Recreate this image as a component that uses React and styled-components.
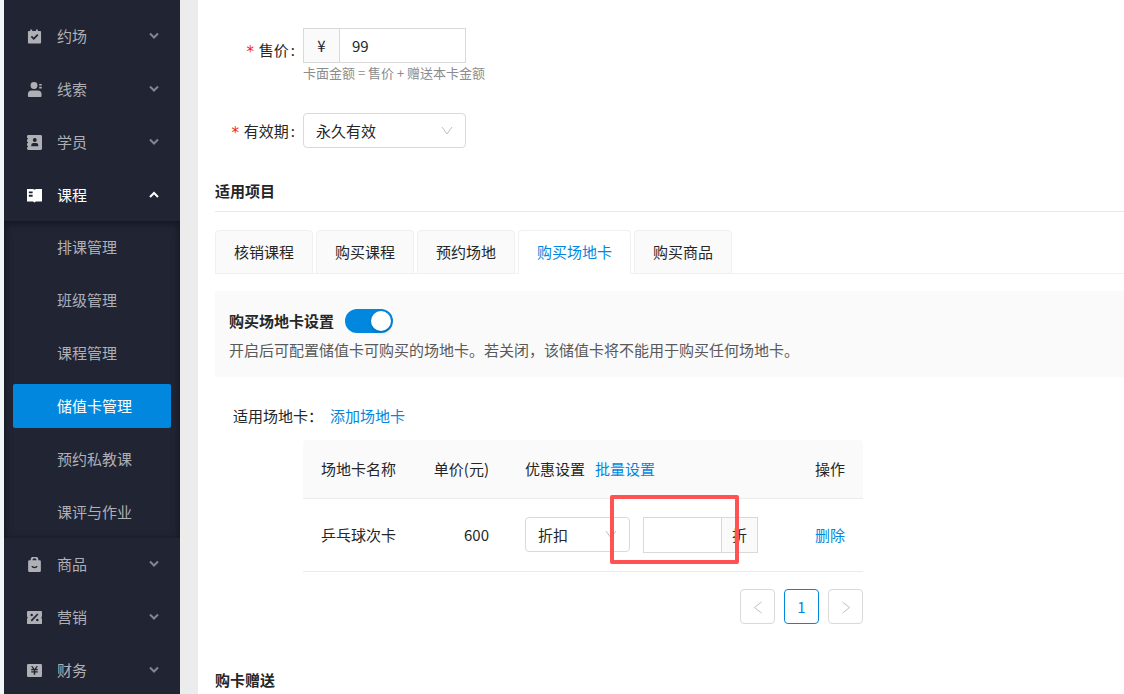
import React, { useState } from "react";
import styled, { createGlobalStyle, css } from "styled-components";

const shopMenu = [
  { key: "booking", name: "约场" },
  { key: "leads", name: "线索" },
  { key: "students", name: "学员" },
  {
    key: "course",
    name: "课程",
    children: ["排课管理", "班级管理", "课程管理", "储值卡管理", "预约私教课", "课评与作业"],
  },
  { key: "goods", name: "商品" },
  { key: "marketing", name: "营销" },
  { key: "finance", name: "财务" },
];

const tabs = ["核销课程", "购买课程", "预约场地", "购买场地卡", "购买商品"];

const icons = {
  booking: (
    <path
      fillRule="evenodd"
      d="M2 2h1.500V.5h2V2h4V.5h2V2H14a1 1 0 0 1 1 1v11.500a1 1 0 0 1-1 1H2a1 1 0 0 1-1-1V3a1 1 0 0 1 1-1zm2 6.500 3.200 3.200 5-5L10.900 5.400 7.200 9.100 5.300 7.200z"
    />
  ),
  leads: (
    <path d="M7.500 0a3.700 3.700 0 1 1 0 7.400 3.700 3.700 0 0 1 0-7.400zM5 9h6.500a4 4 0 0 1 4 4v2a1 1 0 0 1-1 1H2a1 1 0 0 1-1-1v-2a4 4 0 0 1 4-4zM13 2h2.700v1.800H13zM13 5h2.700v1.800H13z" />
  ),
  students: (
    <path
      fillRule="evenodd"
      d="M1.500 0h13A1.500 1.500 0 0 1 16 1.500v13a1.500 1.500 0 0 1-1.500 1.500h-13A1.500 1.500 0 0 1 0 14.500V13h1v-1.500H0v-2.700h1V7.300H0V4.600h1V3.100H0V1.500A1.500 1.500 0 0 1 1.500 0zM8.300 3.300a2.100 2.100 0 1 0 0 4.200 2.100 2.100 0 0 0 0-4.200zM4.500 12h7.600v-1.200a2.500 2.500 0 0 0-2.500-2.400H7a2.500 2.500 0 0 0-2.500 2.400z"
    />
  ),
  course: (
    <path
      fillRule="evenodd"
      d="M0 1h6.500L8 1.800 9.500 1H16v13.500H9.500L8 15.500l-1.500-1H0zM2 3.800v1.900h4V3.800zM2 7.300v1.900h4V7.300z"
    />
  ),
  goods: (
    <path
      fillRule="evenodd"
      d="M3.800 3.500a4.200 4.200 0 0 1 8.400 0h1.300a1.300 1.300 0 0 1 1.300 1.300v9.900a1.300 1.300 0 0 1-1.300 1.300H2.500a1.300 1.300 0 0 1-1.300-1.300V4.800a1.300 1.300 0 0 1 1.300-1.300zm2 0h4.400a2.200 2.200 0 0 0-4.400 0zM4.500 9.500a3.700 3.700 0 0 0 7 0H9.800a2.100 2.100 0 0 1-3.600 0z"
    />
  ),
  marketing: (
    <path
      fillRule="evenodd"
      d="M1 1h14a1 1 0 0 1 1 1v5a1.200 1.200 0 0 0 0 2.200V14a1 1 0 0 1-1 1H1a1 1 0 0 1-1-1V9.200A1.200 1.200 0 0 0 0 7V2a1 1 0 0 1 1-1zm9.900 2.600-7 7.300 1.300 1.300 7-7.300zM5 4a1.300 1.300 0 1 0 0 2.600A1.300 1.300 0 0 0 5 4zm6 5.400a1.300 1.300 0 1 0 0 2.600 1.300 1.300 0 0 0 0-2.600z"
    />
  ),
  finance: (
    <path
      fillRule="evenodd"
      d="M1.300 1h13.400A1.300 1.300 0 0 1 16 2.300v11.400a1.300 1.300 0 0 1-1.300 1.300H1.300A1.300 1.300 0 0 1 0 13.700V2.300A1.300 1.300 0 0 1 1.300 1zM4.300 3.500l2 3H4.500v1.300h2.700v.9H4.500V10h2.700v2.500h1.600V10h2.700V8.700H8.800v-.9h2.700V6.500H9.700l2-3H10L8 6.400 6 3.500z"
    />
  ),
};

function MenuIcon({ name }) {
  return (
    <svg width="15" height="15" viewBox="0 0 16 16" fill="currentColor" aria-hidden="true">
      {icons[name]}
    </svg>
  );
}

function MenuArrow({ open }) {
  return (
    <svg width="10" height="10" viewBox="0 0 10 10" fill="none" stroke="currentColor" strokeWidth="2" aria-hidden="true">
      <path d={open ? "M1 7l4-4 4 4" : "M1 2.500l4 4 4-4"} />
    </svg>
  );
}

function Sidebar() {
  return (
    <Side>
      {shopMenu.map((item) => (
        <MenuGroup key={item.key}>
          <MenuItem type="button" $open={Boolean(item.children)} aria-expanded={Boolean(item.children)}>
            <MenuIcon name={item.key} />
            <span>{item.name}</span>
            <MenuArrow open={Boolean(item.children)} />
          </MenuItem>
          {item.children && (
            <SubMenu>
              {item.children.map((child) => (
                <SubItem key={child} href="#" $active={child === "储值卡管理"}>
                  {child}
                </SubItem>
              ))}
            </SubMenu>
          )}
        </MenuGroup>
      ))}
    </Side>
  );
}

function Select({ label, id, value, width }) {
  return (
    <SelectBox $width={width}>
      <select id={id} aria-label={label} defaultValue={value}>
        <option value={value}>{value}</option>
      </select>
      <svg width="12" height="10" viewBox="0 0 12 10" fill="none" stroke="currentColor" aria-hidden="true">
        <path d="M1 1l5 7 5-7" />
      </svg>
    </SelectBox>
  );
}

function App() {
  const [activeTab, setActiveTab] = useState("购买场地卡");
  const [enabled, setEnabled] = useState(true);

  return (
    <>
      <GlobalStyle />
      <Layout>
        <Sidebar />
        <Main>
          <FormRow>
            <FieldLabel htmlFor="price" $height={44}>
              售价
            </FieldLabel>
            <div>
              <InputGroup $width={163} $height={35}>
                <Addon>¥</Addon>
                <TextInput id="price" defaultValue="99" />
              </InputGroup>
              <Hint>卡面金额 = 售价 + 赠送本卡金额</Hint>
            </div>
          </FormRow>
          <FormRow>
            <FieldLabel htmlFor="validity" $height={35}>
              有效期
            </FieldLabel>
            <Select id="validity" value="永久有效" width={163} />
          </FormRow>

          <SectionTitle>适用项目</SectionTitle>
          <Divider />

          <TabBar role="tablist">
            {tabs.map((tab) => (
              <Tab
                key={tab}
                type="button"
                role="tab"
                aria-selected={tab === activeTab}
                $active={tab === activeTab}
                onClick={() => setActiveTab(tab)}
              >
                {tab}
              </Tab>
            ))}
          </TabBar>

          <Panel>
            <PanelHead>
              <label htmlFor="enable-card">购买场地卡设置</label>
              <Switch
                id="enable-card"
                type="checkbox"
                checked={enabled}
                onChange={(e) => setEnabled(e.target.checked)}
              />
            </PanelHead>
            <p>开启后可配置储值卡可购买的场地卡。若关闭，该储值卡将不能用于购买任何场地卡。</p>
          </Panel>

          <AddRow>
            <span>适用场地卡：</span>
            <Link href="#">添加场地卡</Link>
          </AddRow>

          <TableArea>
            <Table>
              <colgroup>
                <col width="112" />
                <col width="92" />
                <col />
                <col width="66" />
              </colgroup>
              <thead>
                <tr>
                  <Th>场地卡名称</Th>
                  <Th $right>单价(元)</Th>
                  <Th>
                    <HeadCell>
                      优惠设置 <Link href="#">批量设置</Link>
                    </HeadCell>
                  </Th>
                  <Th>操作</Th>
                </tr>
              </thead>
              <tbody>
                <tr>
                  <Td>乒乓球次卡</Td>
                  <Td $right>600</Td>
                  <Td>
                    <Discount>
                      <Select label="优惠方式" value="折扣" width={105} />
                      <InputGroup $width={115} $height={36}>
                        <TextInput aria-label="折扣" />
                        <Addon $end>折</Addon>
                      </InputGroup>
                      <Highlight />
                    </Discount>
                  </Td>
                  <Td>
                    <Link href="#">删除</Link>
                  </Td>
                </tr>
              </tbody>
            </Table>
            <Pagination aria-label="分页">
              <PageButton type="button" aria-label="上一页">
                <svg width="10" height="14" viewBox="0 0 10 14" fill="none" stroke="currentColor">
                  <path d="M8.500 2L1.500 7.500l7 5.500" />
                </svg>
              </PageButton>
              <PageButton type="button" $current>
                1
              </PageButton>
              <PageButton type="button" aria-label="下一页">
                <svg width="10" height="14" viewBox="0 0 10 14" fill="none" stroke="currentColor">
                  <path d="M1.500 2l7 5.500-7 5.500" />
                </svg>
              </PageButton>
            </Pagination>
          </TableArea>

          <SectionTitle $spaced>购卡赠送</SectionTitle>
        </Main>
      </Layout>
    </>
  );
}

const GlobalStyle = createGlobalStyle`
  * {
    box-sizing: border-box;
  }
  body {
    margin: 0;
    background: #fff;
    color: #262626;
    font-family: "Noto Sans CJK SC", "Noto Sans", sans-serif;
    font-size: 15px;
    line-height: 24px;
  }
  button, input, select {
    font: inherit;
    color: inherit;
  }
  p, h3 {
    margin: 0;
  }
`;

const Layout = styled.div`
  display: flex;
  min-height: 100vh;
  background: #ececec;
  border-left: 4px solid #f0f5f8;
`;

const Side = styled.nav`
  flex: 0 0 176px;
  padding-top: 10px;
  background: #212433;
`;

const MenuGroup = styled.div`
  display: flow-root;
`;

const MenuItem = styled.button`
  display: flex;
  align-items: center;
  gap: 15px;
  width: 100%;
  height: 44px;
  margin: 4px 0 5px;
  padding: 0 21px 0 23px;
  border: 0;
  background: none;
  color: ${(props) => (props.$open ? "#fff" : "#afb0b6")};
  cursor: pointer;

  ${(props) =>
    props.$open &&
    css`
      margin-bottom: 4px;
    `}

  span {
    flex: 1;
    text-align: left;
  }
  svg:last-child {
    opacity: ${(props) => (props.$open ? 1 : 0.7)};
  }
`;

const SubMenu = styled.div`
  display: grid;
  gap: 9px;
  padding: 4px 9px;
  box-shadow: inset 0 2px 8px rgba(0, 0, 0, 0.45);
`;

const SubItem = styled.a`
  height: 44px;
  padding-left: 44px;
  border-radius: 2px;
  line-height: 44px;
  text-decoration: none;
  color: ${(props) => (props.$active ? "#fff" : "#afb0b6")};
  background: ${(props) => (props.$active ? "#0188de" : "transparent")};
`;

const Main = styled.main`
  flex: 1;
  min-width: 0;
  margin-left: 18px;
  padding: 28px 0 0 17px;
  background: #fff;
`;

const FormRow = styled.div`
  display: flex;
  align-items: flex-start;
  margin-bottom: 30px;
`;

const FieldLabel = styled.label`
  display: flex;
  flex: 0 0 88px;
  align-items: center;
  justify-content: flex-end;
  height: ${(props) => props.$height}px;
  padding-right: 8px;

  &::before {
    content: "*";
    margin-right: 4px;
    padding-top: 4px;
    font-family: "DejaVu Sans Mono", monospace;
    color: #f5222d;
  }
  &::after {
    content: ":";
    margin-left: 2px;
  }
`;

const InputGroup = styled.div`
  display: flex;
  width: ${(props) => props.$width}px;
  height: ${(props) => props.$height}px;
  border: 1px solid #d9d9d9;
`;

const TextInput = styled.input`
  flex: 1;
  min-width: 0;
  padding: 0 12px;
  border: 0;
  outline: 0;
  background: #fff;
`;

const Addon = styled.span`
  flex: 0 0 36px;
  text-align: center;
  line-height: 33px;
  background: #fafafa;
  border: 0 solid #d9d9d9;
  border-width: ${(props) => (props.$end ? "0 0 0 1px" : "0 1px 0 0")};
`;

const Hint = styled.p`
  font-size: 13px;
  line-height: 20px;
  color: #8c8c8c;
`;

const SelectBox = styled.div`
  position: relative;
  width: ${(props) => props.$width}px;

  select {
    display: block;
    width: 100%;
    height: 35px;
    padding: 0 12px;
    border: 1px solid #d9d9d9;
    border-radius: 4px;
    background: #fff;
    appearance: none;
  }
  svg {
    position: absolute;
    top: 13px;
    right: 13px;
    color: #bfbfbf;
    pointer-events: none;
  }
`;

const SectionTitle = styled.h3`
  margin-top: ${(props) => (props.$spaced ? 44 : 31)}px;
  font-size: 15px;
  font-weight: 700;
  line-height: 24px;
`;

const Divider = styled.hr`
  margin: 8px 0 18px;
  border: 0;
  border-top: 1px solid #e8e8e8;
`;

const TabBar = styled.div`
  display: flex;
  gap: 3px;
  height: 44px;
  box-shadow: inset 0 -1px #f0f0f0;
`;

const Tab = styled.button`
  padding: 0 18px;
  border: 1px solid #f0f0f0;
  border-bottom-color: ${(props) => (props.$active ? "#fff" : "#f0f0f0")};
  border-radius: 4px 4px 0 0;
  background: ${(props) => (props.$active ? "#fff" : "#fafafa")};
  color: ${(props) => (props.$active ? "#0188de" : "inherit")};
  cursor: pointer;
`;

const Panel = styled.section`
  margin-top: 17px;
  padding: 18px 14px 15px;
  background: #fafafa;

  p {
    margin-top: 5px;
    color: #595959;
  }
`;

const PanelHead = styled.div`
  display: flex;
  align-items: center;
  gap: 11px;
  font-weight: 700;
`;

const Switch = styled.input`
  display: flex;
  justify-content: ${(props) => (props.checked ? "flex-end" : "flex-start")};
  width: 48px;
  height: 24px;
  margin: 0;
  padding: 2px;
  border-radius: 12px;
  background: ${(props) => (props.checked ? "#0188de" : "#bfbfbf")};
  appearance: none;
  cursor: pointer;

  &::before {
    content: "";
    width: 20px;
    height: 20px;
    border-radius: 50%;
    background: #fff;
    box-shadow: 0 2px 4px rgba(0, 35, 11, 0.2);
  }
`;

const Link = styled.a`
  color: #0188de;
  text-decoration: none;
`;

const AddRow = styled.div`
  display: flex;
  gap: 7px;
  margin-top: 27px;
  padding-left: 18px;
`;

const TableArea = styled.div`
  max-width: 648px;
  margin-top: 12px;
  padding-left: 88px;
`;

const Table = styled.table`
  width: 100%;
  table-layout: fixed;
  border-spacing: 0;
`;

const Th = styled.th`
  height: 59px;
  padding: 0 18px;
  font-weight: 400;
  text-align: ${(props) => (props.$right ? "right" : "left")};
  white-space: nowrap;
  background: #fafafa;
  border-bottom: 1px solid #ebebeb;

  &:first-child {
    border-top-left-radius: 4px;
  }
  &:last-child {
    padding-right: 0;
    border-top-right-radius: 4px;
  }
`;

const Td = styled.td`
  height: 73px;
  padding: 0 18px;
  text-align: ${(props) => (props.$right ? "right" : "left")};
  white-space: nowrap;
  border-bottom: 1px solid #ebebeb;

  &:last-child {
    padding-right: 0;
  }
`;

const HeadCell = styled.div`
  display: flex;
  gap: 10px;
`;

const Discount = styled.div`
  position: relative;
  display: flex;
  align-items: flex-start;
  gap: 13px;
`;

const Highlight = styled.div`
  position: absolute;
  top: -22px;
  left: 85px;
  width: 129px;
  height: 69px;
  border: 4px solid #ff5252;
  border-radius: 2px;
  pointer-events: none;
`;

const Pagination = styled.nav`
  display: flex;
  justify-content: flex-end;
  gap: 9px;
  margin-top: 17px;
`;

const PageButton = styled.button`
  display: flex;
  align-items: center;
  justify-content: center;
  width: 35px;
  height: 35px;
  padding: 0;
  border: 1px solid ${(props) => (props.$current ? "#0188de" : "#d9d9d9")};
  border-radius: 4px;
  background: #fff;
  color: ${(props) => (props.$current ? "#0188de" : "#bfbfbf")};
  cursor: pointer;
`;

export default App;
